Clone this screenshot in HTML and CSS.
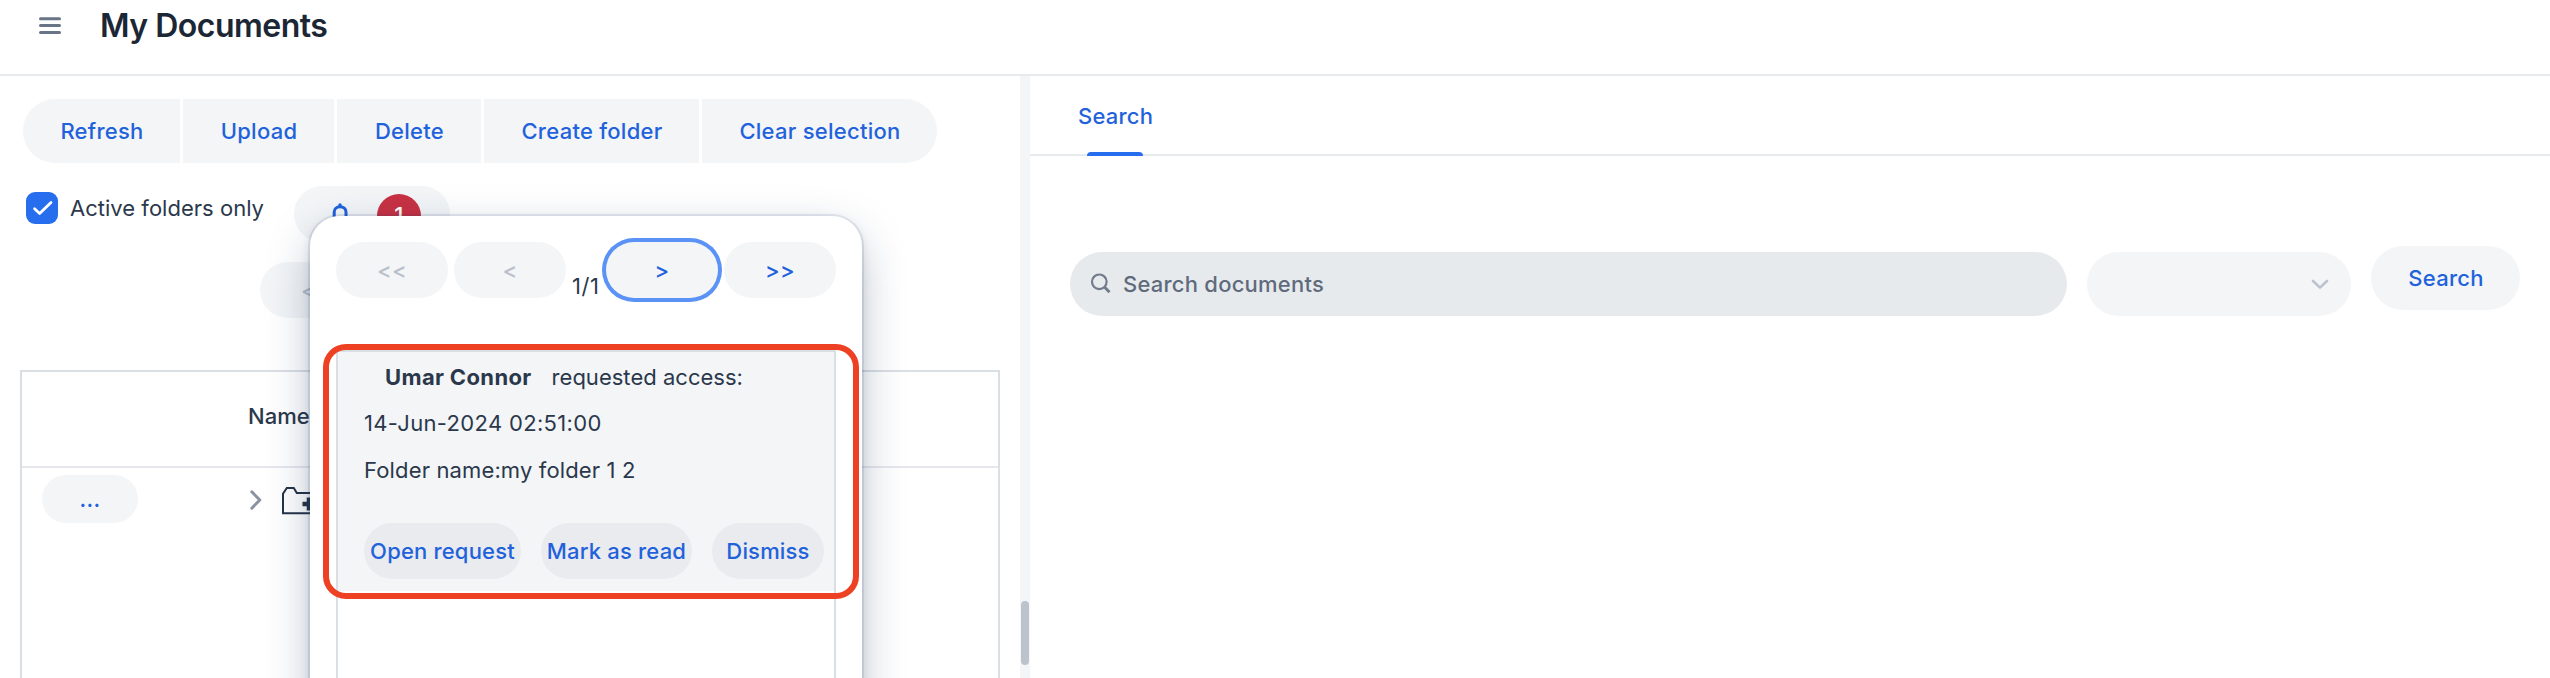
FILE: index.html
```html
<!DOCTYPE html>
<html lang="en">
<head>
<meta charset="utf-8">
<title>My Documents</title>
<link rel="stylesheet" href="styles.css">
</head>
<body>
<header class="navbar">
  <svg class="menu-icon" width="22" height="18" viewBox="0 0 22 18"><path d="M1.5 1.7h19M1.5 8.6h19M1.5 15.5h19" stroke="#697487" stroke-width="3" stroke-linecap="round"/></svg>
  <h1 class="title">My Documents</h1>
</header>
<main class="split">
  <section class="left">
    <div class="toolbar">
      <button class="btn first">Refresh</button>
      <button class="btn upload">Upload</button>
      <button class="btn delete">Delete</button>
      <button class="btn create">Create folder</button>
      <button class="btn last">Clear selection</button>
    </div>
    <div class="filters">
      <span class="checkbox"><svg width="32" height="32" viewBox="0 0 32 32"><path d="M8.6 16.8l5 4.8L25 10.4" fill="none" stroke="#fff" stroke-width="2.800" stroke-linecap="round" stroke-linejoin="round"/></svg></span>
      <span class="check-label">Active folders only</span>
      <button class="bell">
        <svg class="bell-icon" width="18" height="26" viewBox="0 0 18 26"><path d="M3.200 22V10C3.200 7 5.500 4.700 9 4.700s6 2.300 6 5.300V22" fill="none" stroke="#1f62db" stroke-width="3"/><path d="M7.300 4.500V3a1.700 1.700 0 0 1 3.400 0v1.500z" fill="#1f62db"/><path d="M1 22h16" stroke="#1f62db" stroke-width="3"/></svg>
        <span class="badge">1</span>
      </button>
    </div>
    <div class="pager-behind"><button class="pill">&lt;&lt;</button></div>
    <div class="grid">
      <div class="grid-head"><span>Name</span></div>
      <div class="grid-row">
        <button class="dots">...</button>
        <svg class="chevron" width="12" height="20" viewBox="0 0 12 20"><path d="M1.800 1.800L9.800 10l-8 8.200" fill="none" stroke="#8b92a0" stroke-width="3" stroke-linecap="round" stroke-linejoin="round"/></svg>
        <svg class="folder" width="36" height="28" viewBox="0 0 36 28"><path d="M1 26.200V6.800L4.800 1h7l3 5H34v20.200z" fill="none" stroke="#243347" stroke-width="2"/><path d="M20.500 17h13M27 10.500v13" stroke="#243347" stroke-width="4.500"/></svg>
      </div>
    </div>
  </section>
  <div class="splitter"><span class="thumb"></span></div>
  <section class="right">
    <div class="tabs"><span class="tab">Search</span></div>
    <div class="search-row">
      <div class="field">
        <svg width="22" height="22" viewBox="0 0 22 22"><circle cx="9.300" cy="8.800" r="7.300" fill="none" stroke="#717b8b" stroke-width="2.200"/><path d="M14.500 14l5 5.200" stroke="#717b8b" stroke-width="3"/></svg>
        <span>Search documents</span>
      </div>
      <div class="select"><svg width="18" height="11" viewBox="0 0 18 11"><path d="M2 2l7 6.600L16 2" fill="none" stroke="#bcc3ce" stroke-width="2.600" stroke-linecap="round" stroke-linejoin="round"/></svg></div>
      <button class="btn search-btn">Search</button>
    </div>
  </section>
</main>
<div class="popup">
  <div class="pager">
    <button class="pill off">&lt;&lt;</button>
    <button class="pill off">&lt;</button>
    <span class="count">1/1</span>
    <button class="pill focus">&gt;</button>
    <button class="pill">&gt;&gt;</button>
  </div>
  <div class="list">
    <div class="item">
      <div class="line who"><b>Umar Connor</b><span>requested access:</span></div>
      <div class="line date">14-Jun-2024 02:51:00</div>
      <div class="line name">Folder name:my folder 1 2</div>
      <div class="actions">
        <button class="act open">Open request</button>
        <button class="act mark">Mark as read</button>
        <button class="act dismiss">Dismiss</button>
      </div>
    </div>
  </div>
  <div class="highlight"></div>
</div>
</body>
</html>
```
FILE: styles.css
```css
* { box-sizing: border-box; }
html, body { height: 678px; overflow: hidden; }
body {
  margin: 0;
  position: relative;
  background: #fff;
  color: #2b384b;
  font: 400 22px/28px Inter, sans-serif;
  letter-spacing: 0.02px;
  display: flex;
  flex-direction: column;
}
svg { display: block; flex: none; }
button {
  border: 0;
  padding: 0;
  margin: 0;
  background: #f3f5f7;
  color: #1f62db;
  font: 500 22px/28px Inter, sans-serif;
  letter-spacing: 0.27px;
  flex: none;
  white-space: nowrap;
}

/* Header */
.navbar {
  height: 76px;
  flex: none;
  border-bottom: 2px solid #e7ebee;
  display: flex;
  align-items: flex-start;
  padding-left: 39px;
  gap: 39px;
}
.menu-icon { margin-top: 17px; }
.title {
  margin: 6px 0 0;
  font-size: 32px;
  line-height: 40px;
  font-weight: 600;
  letter-spacing: -0.5px;
  color: #1c2736;
}

.split { display: flex; flex: 1; min-height: 0; }
.left { width: 1020px; flex: none; display: flex; flex-direction: column; }

/* Toolbar */
.toolbar { display: flex; gap: 3px; margin: 23px 0 0 23px; }
.btn { height: 64px; padding-left: 1px; }
.first { width: 157px; border-radius: 32px 0 0 32px; }
.upload { width: 151px; }
.delete { width: 144px; }
.create { width: 215px; }
.last { width: 235px; border-radius: 0 32px 32px 0; }

.filters { display: flex; align-items: flex-start; height: 56px; margin: 23px 0 0 26px; }
.checkbox { width: 32px; height: 32px; border-radius: 9px; background: #266eee; margin-top: 6px; flex: none; }
.check-label { width: 224px; margin: 8px 0 0 12px; flex: none; }
.bell { width: 156px; height: 56px; border-radius: 28px; display: flex; align-items: flex-start; padding: 8px 0 0 37px; gap: 28px; }
.bell-icon { margin-top: 8px; }
.badge {
  width: 44px;
  height: 44px;
  border-radius: 22px;
  background: #c83143;
  color: #fff;
  line-height: 42px;
  text-align: center;
}
.pager-behind { margin: 20px 0 0 260px; height: 56px; }
.pill { width: 112px; height: 56px; border-radius: 28px; }
.off, .pager-behind .pill { color: #b9c0ca; }

/* Folder grid */
.grid { width: 980px; flex: 1; margin: 52px 0 0 20px; border: 2px solid #dadfe4; border-bottom: 0; }
.grid-head { height: 96px; border-bottom: 2px solid #e6e8ed; padding: 30px 0 0 226px; font-weight: 500; }
.grid-row { display: flex; padding: 7px 0 0 20px; }
.dots { width: 96px; height: 48px; border-radius: 24px; }
.chevron { margin: 15px 0 0 112px; }
.folder { margin: 12px 0 0 20px; }

.splitter { width: 10px; flex: none; background: #f4f5f7; display: flex; justify-content: center; }
.thumb { width: 8px; height: 64px; margin-top: 525px; border-radius: 4px; background: #bcc3cc; }

/* Search panel */
.right { flex: 1; }
.tabs { height: 80px; border-bottom: 2px solid #e7ebee; padding-left: 48px; display: flex; }
.tab { position: relative; line-height: 80px; font-weight: 500; color: #1f62db; letter-spacing: 0.2px; }
.tab::after {
  content: "";
  position: absolute;
  left: 9px;
  top: 76px;
  width: 56px;
  height: 4px;
  border-radius: 4px 4px 0 0;
  background: #266eee;
}
.search-row { display: flex; align-items: flex-start; margin: 90px 30px 0 40px; }
.field {
  width: 997px;
  height: 64px;
  margin-top: 6px;
  border-radius: 32px;
  background: #e7eaed;
  color: #5f6b7c;
  font-weight: 500;
  letter-spacing: 0.23px;
  display: flex;
  align-items: center;
  padding-left: 20px;
  gap: 11px;
}
.select {
  width: 264px;
  height: 64px;
  margin: 6px 20px 0;
  border-radius: 32px;
  background: #f3f5f7;
  display: flex;
  align-items: center;
  justify-content: flex-end;
  padding-right: 22px;
}
.search-btn { width: 149px; border-radius: 32px; }

/* Notification popup */
.popup {
  position: absolute;
  left: 310px;
  top: 216px;
  width: 552px;
  height: 800px;
  background: #fff;
  border-radius: 30px;
  box-shadow: 0 0 0 2px rgba(25, 59, 103, 0.1), 0 4px 12px -2px rgba(25, 50, 90, 0.16), 0 16px 48px -6px rgba(25, 50, 90, 0.38);
  padding: 26px 26px 0;
  display: flex;
  flex-direction: column;
}
.pager { display: flex; height: 56px; }
.pager .pill + .pill { margin-left: 6px; }
.count { width: 40px; padding-left: 6px; margin-top: 30px; letter-spacing: 0.5px; }
.focus { box-shadow: 0 0 0 4px #5a92f5; }
.list { flex: 1; margin-top: 52px; border: 2px solid #dadfe4; }
.item { height: 239px; background: #f3f5f7; padding: 11px 0 0 26px; }
.line { height: 28px; white-space: nowrap; }
.who { display: flex; padding-left: 21px; gap: 20px; }
.who b { font-weight: 700; letter-spacing: 0.35px; }
.date { margin-top: 18px; letter-spacing: 0.33px; }
.name { margin-top: 19px; letter-spacing: 0.14px; }
.actions { display: flex; gap: 20px; margin-top: 39px; }
.act { height: 56px; border-radius: 28px; background: #e9ebef; letter-spacing: 0.18px; }
.open { width: 157px; }
.mark { width: 151px; }
.dismiss { width: 112px; }
.highlight {
  position: absolute;
  left: 13px;
  top: 128px;
  width: 536px;
  height: 255px;
  border: 6px solid #ee4023;
  border-radius: 23px;
}
```
